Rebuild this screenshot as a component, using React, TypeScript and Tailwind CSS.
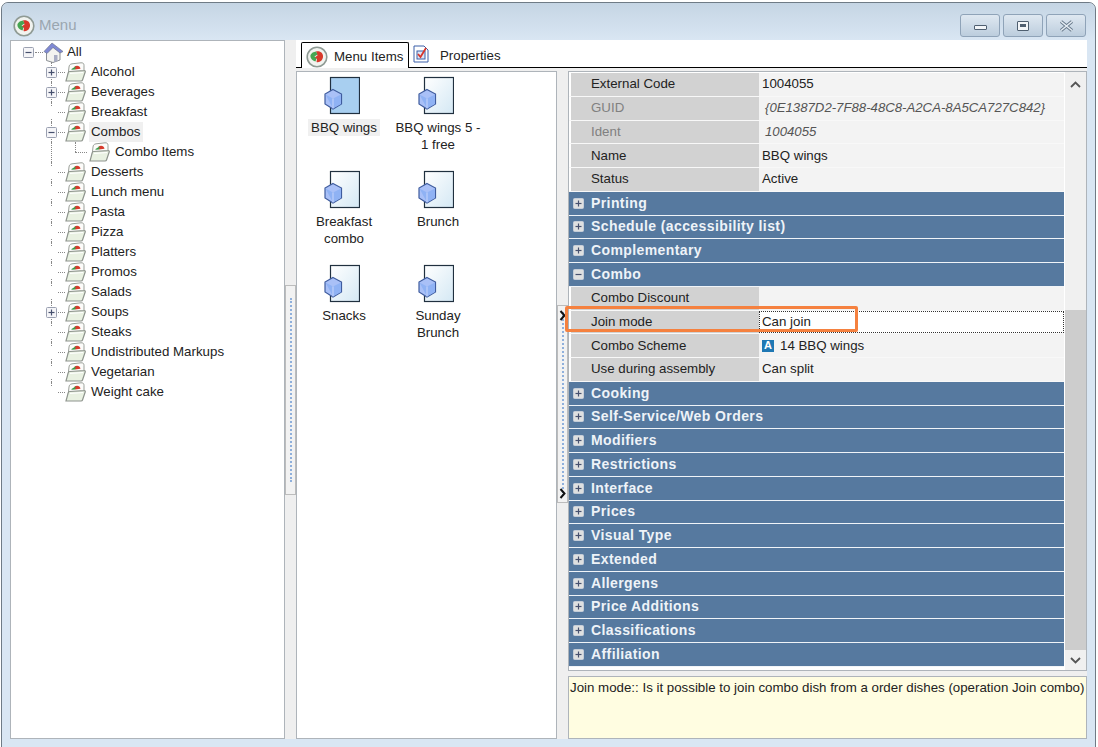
const font = { fontFamily: '"Liberation Sans", Arial, sans-serif' };

function Logo() {
  return (
    <svg width="22" height="22" viewBox="0 0 22 22" className="shrink-0">
      <circle cx="11" cy="11" r="9.800" fill="#f1f3ef" stroke="#8f9a94" strokeWidth="1.600" />
      <path d="M10 5.500c4-1 7.500 1.500 7 5.500-.4 3.500-3.500 6-6.500 5l.5-3-2.500-1.500 3-2z" fill="#d8392b" />
      <path d="M4.500 9c1-2 3-3.200 5.500-3.500l1.500 3-3 2 2 2-1 3C6 14.500 4 12 4.500 9z" fill="#46a552" />
    </svg>
  );
}

function House() {
  return (
    <svg width="21" height="21" viewBox="0 0 21 21">
      <path d="M3.500 10v8.500l6.500 2 7-2.500v-8L10 5z" fill="#f3f3f0" stroke="#8b8f95" />
      <path d="M1 9.500 9 1l11 8.500-3 1.500-7-5.500-6 6z" fill="#7f89d4" stroke="#70788f" strokeWidth="0.7" />
      <path d="M11 13h3.500v6l-3.500 1z" fill="#a9adc4" />
    </svg>
  );
}

function Folder() {
  return (
    <svg width="21" height="20" viewBox="0 0 21 20">
      <path d="M2.500 18.500 4 5c.2-1.800 1-2.800 3-3.200L16 .8c2-.2 3 .8 3 2.500V12z" fill="#fcfcfa" stroke="#9ba09a" />
      <path d="M9.500 4.500c2.800-1.400 5.500-.6 6 2.300l-5.500.7z" fill="#d63b2c" />
      <path d="M6.500 7 11 4.300 10 7.500l-3.500.3z" fill="#3b9c49" />
      <path d="M1 19 3.200 10.800c.2-.8.700-1.200 1.500-1.300L19 8.600c1-.1 1.500.5 1.200 1.400L17.500 18c-.2.700-.7 1-1.500 1z" fill="#e9f1e2" stroke="#8e948d" strokeWidth="1.200" />
      <path d="M5 11.500 18 10.500" stroke="#fff" strokeWidth="1.200" />
    </svg>
  );
}

function Box({ open, light }: { open?: boolean; light?: boolean }) {
  return (
    <svg width="11" height="11" viewBox="0 0 11 11" className="block">
      <rect x="0.500" y="0.500" width="10" height="10" rx="1" fill={light ? "#dfe0e0" : "#f5f5f8"} stroke={light ? "#c5cdd8" : "#9aa0b0"} />
      <path d="M2.500 5.500h6" stroke="#46506e" strokeWidth="1.200" />
      {!open && <path d="M5.500 2.500v6" stroke="#46506e" strokeWidth="1.200" />}
    </svg>
  );
}

function DocCube({ selected }: { selected?: boolean }) {
  return (
    <svg width="36" height="40" viewBox="0 0 36 40" className="block">
      <defs>
        <linearGradient id="doc" x1="0" y1="0" x2="1" y2="1">
          <stop offset="0" stopColor="#ffffff" />
          <stop offset="1" stopColor="#d4e8f4" />
        </linearGradient>
      </defs>
      <rect x="6.500" y="1.500" width="29" height="36" fill={selected ? "#a8cff0" : "url(#doc)"} stroke="#20303f" strokeWidth="1.200" />
      <path d="M9 13.500 17.500 18v10L9 33 1 28V18z" fill="#a9c0f7" stroke="#3f5c9e" strokeWidth="1.200" />
      <path d="M1.500 18.500 9 22.500l8-4v9.500l-8 4.500z" fill="#8fb2f4" />
      <path d="M9 22.500V32.500" stroke="#c9d6fb" />
    </svg>
  );
}

const tree = [
  { name: "Alcohol", box: "plus" },
  { name: "Beverages", box: "plus" },
  { name: "Breakfast" },
  { name: "Combos", box: "minus", active: true },
  { name: "Combo Items", child: true },
  { name: "Desserts" },
  { name: "Lunch menu" },
  { name: "Pasta" },
  { name: "Pizza" },
  { name: "Platters" },
  { name: "Promos" },
  { name: "Salads" },
  { name: "Soups", box: "plus" },
  { name: "Steaks" },
  { name: "Undistributed Markups" },
  { name: "Vegetarian" },
  { name: "Weight cake" },
];

function TreePanel() {
  return (
    <div className="w-[275px] shrink-0 border border-[#aeb4ba] bg-white pt-[1px] text-[13.3px] text-[#222]">
      <div className="relative flex h-5 items-center pl-[12px]">
        <Box open />
        <span className="ml-[1px] w-[8px] border-t border-dotted border-[#888]" />
        <House />
        <span className="ml-[3px]">All</span>
      </div>
      {tree.map((item, i) => (
        <div key={item.name} className="relative flex h-5 items-center pl-[35px]">
          <span
            className={`absolute left-[40px] top-0 border-l border-dotted border-[#888] ${
              i === tree.length - 1 ? "h-[10px]" : "h-5"
            }`}
          />
          {item.child ? (
            <>
              <span className="absolute left-[64px] top-0 h-[10px] border-l border-dotted border-[#888]" />
              <span className="absolute left-[64px] top-[10px] w-[12px] border-t border-dotted border-[#888]" />
              <span className="ml-[43px]"><Folder /></span>
              <span className="ml-[5px]">{item.name}</span>
            </>
          ) : (
            <>
              <span className="absolute left-[40px] top-[10px] w-[14px] border-t border-dotted border-[#888]" />
              <span className="relative flex w-[11px] justify-center bg-white">
                {item.box ? <Box open={item.box === "minus"} /> : <span className="h-[11px]" />}
              </span>
              <span className="relative ml-[8px]"><Folder /></span>
              <span className={`ml-[3px] px-[2px] ${item.active ? "bg-[#f0f0f0]" : ""}`}>{item.name}</span>
            </>
          )}
        </div>
      ))}
    </div>
  );
}

function SplitArrow({ className }: { className: string }) {
  return (
    <svg width="7" height="11" viewBox="0 0 7 11" className={`absolute left-[2px] ${className}`}>
      <path d="M1.500 1 5.500 5.500 1.500 10" fill="none" stroke="#111" strokeWidth="2" />
    </svg>
  );
}

const items = [
  { name: "BBQ wings", selected: true },
  { name: "BBQ wings 5 - 1 free" },
  { name: "Breakfast combo" },
  { name: "Brunch" },
  { name: "Snacks" },
  { name: "Sunday Brunch" },
];

function ItemList() {
  return (
    <div className="grid w-[261px] shrink-0 grid-cols-[94px_94px] auto-rows-[94px] content-start border border-[#aeb4ba] bg-white pt-[4px] text-[13.3px] text-[#222]">
      {items.map((item) => (
        <div key={item.name} className="flex flex-col items-center">
          <span className="mr-[4px]"><DocCube selected={item.selected} /></span>
          <span
            className={`mt-[3px] px-[3px] text-center leading-[17px] ${
              item.selected ? "bg-[#f0f0f0]" : ""
            } ${item.name.length > 12 ? "w-[94px]" : ""}`}
          >
            {item.name}
          </span>
        </div>
      ))}
    </div>
  );
}

function PropRow({
  label,
  value,
  dim,
  focused,
  scheme,
}: {
  label: string;
  value?: string;
  dim?: boolean;
  focused?: boolean;
  scheme?: boolean;
}) {
  return (
    <div className="flex h-[23.75px] border-b border-[#f8f8f8] pl-[2px] text-[13.3px]">
      <div className={`flex w-[188px] shrink-0 items-center bg-[#d2d2d2] pl-[20px] ${dim ? "text-[#808080]" : "text-[#222]"}`}>
        {label}
      </div>
      <div
        className={`flex min-w-0 flex-1 items-center whitespace-nowrap bg-[#f3f3f3] ${
          focused ? "border border-dotted border-[#333] bg-white pl-[2px]" : "pl-[3px]"
        } ${dim ? "pl-[6px] text-[13.2px] italic text-[#555]" : "text-[#222]"}`}
      >
        {scheme && (
          <span className="mr-[6px] flex h-3 w-3 items-center justify-center bg-[#1f78b4] text-[11px] font-bold leading-none text-white">
            A
          </span>
        )}
        {value}
      </div>
    </div>
  );
}

function Section({ name, open }: { name: string; open?: boolean }) {
  return (
    <div className="flex h-[23.75px] items-center gap-[7px] border-b border-[#f0f4f8] bg-[#56799f] pl-[4px] text-[14px] font-bold tracking-[0.4px] text-[#eef3f8]">
      <Box open={open} light />
      <span>{name}</span>
    </div>
  );
}

const afterCombo = [
  "Cooking",
  "Self-Service/Web Orders",
  "Modifiers",
  "Restrictions",
  "Interface",
  "Prices",
  "Visual Type",
  "Extended",
  "Allergens",
  "Price Additions",
  "Classifications",
  "Affiliation",
];

function PropertyGrid() {
  return (
    <div className="relative flex h-[600px] shrink-0 border border-[#aeb4ba] bg-white">
      <div className="w-[495px] shrink-0 pt-[1px]">
        <PropRow label="External Code" value="1004055" />
        <PropRow label="GUID" value="{0E1387D2-7F88-48C8-A2CA-8A5CA727C842}" dim />
        <PropRow label="Ident" value="1004055" dim />
        <PropRow label="Name" value="BBQ wings" />
        <PropRow label="Status" value="Active" />
        <Section name="Printing" />
        <Section name="Schedule (accessibility list)" />
        <Section name="Complementary" />
        <Section name="Combo" open />
        <PropRow label="Combo Discount" />
        <PropRow label="Join mode" value="Can join" focused />
        <PropRow label="Combo Scheme" value="14 BBQ wings" scheme />
        <PropRow label="Use during assembly" value="Can split" />
        {afterCombo.map((name) => (
          <Section key={name} name={name} />
        ))}
      </div>
      <div className="ml-[1px] flex w-[21px] shrink-0 flex-col bg-[#f0f0f0]">
        <div className="flex h-[22px] items-center justify-center pt-[2px]">
          <svg width="11" height="7" viewBox="0 0 11 7"><path d="M1 6l4.500-4.500L10 6" fill="none" stroke="#555" strokeWidth="1.800" /></svg>
        </div>
        <div className="mt-[216px] h-[340px] bg-[#cdcdcd]" />
        <div className="flex flex-1 items-center justify-center">
          <svg width="11" height="7" viewBox="0 0 11 7"><path d="M1 1l4.500 4.500L10 1" fill="none" stroke="#555" strokeWidth="1.800" /></svg>
        </div>
      </div>
      <div className="absolute left-[-4px] top-[234px] h-[26px] w-[293px] rounded-[2px] border-[3px] border-[#f5813f]" />
    </div>
  );
}

function WinButton({ children }: { children: React.ReactNode }) {
  return (
    <div className="flex h-[23px] w-[40px] items-center justify-center rounded-[3px] border border-[#8fa3b8] bg-gradient-to-b from-[#dfe8f1] to-[#bccddd]">
      {children}
    </div>
  );
}

export default function App() {
  return (
    <div style={font} className="h-[747px] w-[1098px] overflow-hidden bg-white pl-[1px] pr-[2px] pt-[2px]">
      <div className="flex h-[760px] flex-col rounded-t-[7px] border border-[#6f7b86] bg-[#d9e6f3]">
        <div className="flex h-[37px] shrink-0 items-center rounded-t-[7px] bg-gradient-to-b from-[#c5d5e4] to-[#d9e6f3] pl-[11px] pr-[9px] pt-[8px]">
          <Logo />
          <span className="ml-[4px] text-[15px] text-[#9aa6b0]">Menu</span>
          <div className="ml-auto flex gap-[3px]">
            <WinButton>
              <span className="mt-[3px] h-[5px] w-[13px] rounded-[1px] border border-[#4f5f70] bg-[#f2f5f8]" />
            </WinButton>
            <WinButton>
              <span className="flex h-[10px] w-[12px] items-center justify-center rounded-[1px] border border-[#4f5f70] bg-[#f2f5f8]">
                <span className="h-[3px] w-[6px] bg-[#4f5f70]" />
              </span>
            </WinButton>
            <WinButton>
              <svg width="15" height="12" viewBox="0 0 15 12">
                <path d="M2 1.500l11 9M13 1.500l-11 9" stroke="#66788a" strokeWidth="3.400" />
                <path d="M2 1.500l11 9M13 1.500l-11 9" stroke="#e6edf4" strokeWidth="1.600" />
              </svg>
            </WinButton>
          </div>
        </div>
        <div className="ml-[8px] mr-[8px] flex h-[699px] shrink-0 bg-[#efefef]">
          <TreePanel />
          <div className="flex w-[11px] shrink-0 flex-col items-center bg-[#efefef] pt-[245px]">
            <div className="flex h-[210px] w-[11px] justify-center border border-[#bcbcbc] bg-[#f2f2f2] py-[12px]">
              <div className="border-l-2 border-dotted border-[#8fb0dc]" />
            </div>
          </div>
          <div className="flex min-w-0 flex-1 flex-col">
            <div className="flex h-[28px] shrink-0 items-end border-b border-black bg-white pl-[5px] text-[13.3px] text-[#222]">
              <div className="mb-[-1px] flex h-[26px] w-[108px] items-center gap-[6px] rounded-t-[2px] border border-b-0 border-black bg-white pl-[4px] pt-[2px]">
                <Logo />
                <span>Menu Items</span>
              </div>
              <div className="flex h-[26px] items-center pl-[4px] pt-[2px]">
                <svg width="16" height="18" viewBox="0 0 16 18" className="mt-[-3px]">
                  <path d="M1 1h10l4 4v12H1z" fill="#fff" stroke="#3a5fa8" />
                  <rect x="4" y="6" width="8" height="8" fill="#dfe6f5" stroke="#3a5fa8" />
                  <path d="M5 9l2.500 3L13 3" fill="none" stroke="#d8352a" strokeWidth="1.800" />
                </svg>
                <span className="ml-[11px] mt-[2px]">Properties</span>
              </div>
            </div>
            <div className="flex min-h-0 flex-1 pt-[3px]">
              <ItemList />
              <div className="relative flex w-[11px] shrink-0 flex-col items-center bg-[#efefef] pt-[234px]">
                <div className="flex h-[198px] w-[11px] justify-center border border-[#bcbcbc] bg-[#f2f2f2] py-[6px]">
                  <div className="border-l-2 border-dotted border-[#8fb0dc]" />
                </div>
                <SplitArrow className="top-[239px]" />
                <SplitArrow className="top-[417px]" />
              </div>
              <div className="flex min-w-0 flex-1 flex-col">
                <PropertyGrid />
                <div className="mt-[5px] flex-1 whitespace-nowrap border border-[#aeb4ba] bg-[#fffde1] pl-[1px] pt-[3px] text-[13.3px] leading-4 text-[#222]">
                  Join mode:: Is it possible to join combo dish from a order dishes (operation Join combo)
                </div>
              </div>
            </div>
          </div>
        </div>
      </div>
    </div>
  );
}
